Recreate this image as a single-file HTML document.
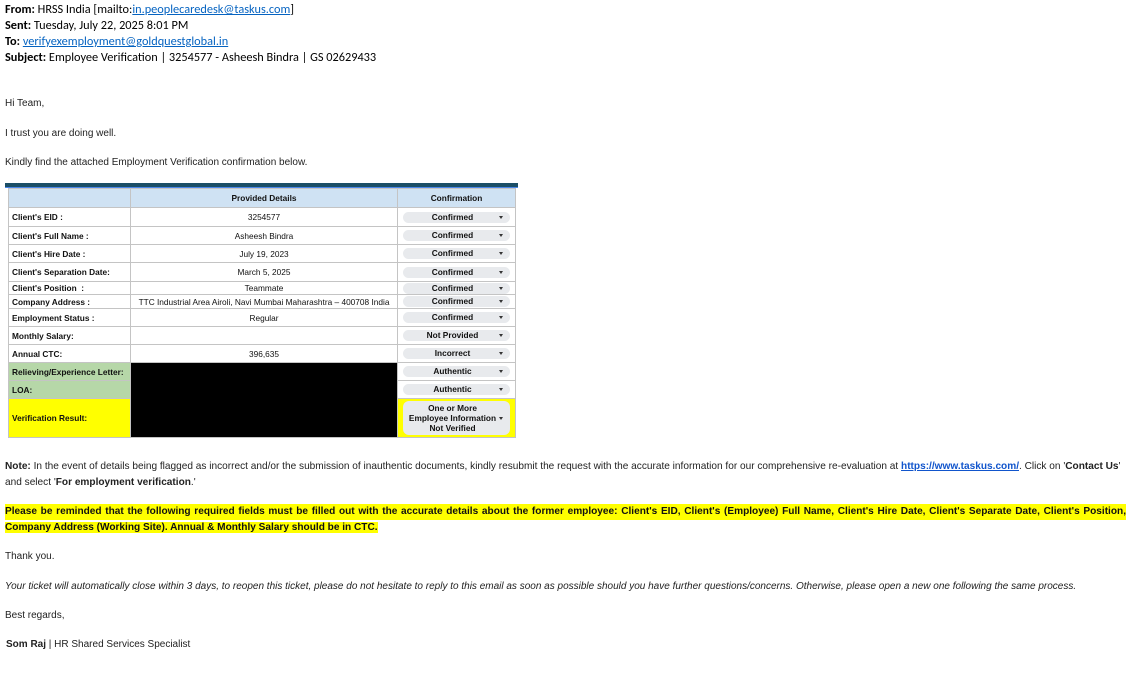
<!DOCTYPE html>
<html><head><meta charset="utf-8">
<style>
*{margin:0;padding:0;box-sizing:border-box}
html,body{width:1131px;height:690px;background:#fff;overflow:hidden}
body{position:relative;font-family:"Liberation Sans",Arial,sans-serif;color:#222}
.h{position:absolute;left:5px;font-family:"Carlito","Liberation Sans",sans-serif;font-size:12.3px;color:#000;white-space:nowrap;line-height:16px}
.h b{font-weight:bold}
.h a{color:#0563c1;text-decoration:underline}
.p{position:absolute;left:5px;font-size:10px;white-space:nowrap;color:#222}
.bar{position:absolute;left:5px;top:183px;width:513px;height:5px;background:#1b4e66;border-bottom:1px solid #4a86e8}
table{position:absolute;left:8px;top:188px;border-collapse:collapse;font-size:8.3px;table-layout:fixed}
td{border:1px solid #c4c4c4;padding:0;overflow:hidden;white-space:nowrap;color:#111}
td.l{font-weight:bold;padding-left:3px;width:122px}
td.m{text-align:center;width:267px}
td.r{width:118px;position:relative}
tr.hd td{background:#cfe2f3;font-weight:bold;text-align:center}
.pill{position:absolute;left:5px;right:5px;top:50%;height:11px;margin-top:-5.5px;background:#e8eaed;border-radius:6px;font-weight:bold;text-align:center;line-height:11px;padding-right:8px}
.pill:after{content:"";position:absolute;right:7px;top:50%;margin-top:-1.5px;border-left:2.5px solid transparent;border-right:2.5px solid transparent;border-top:3px solid #333}
.g{background:#b6d7a8}
.y{background:#ffff00}
.k{background:#000}
.note{position:absolute;left:5px;width:1121px;font-size:10.1px;line-height:16px;text-align:justify;color:#222}
.note a{color:#1155cc;font-weight:bold;text-decoration:underline}
.hl{position:absolute;left:5px;font-size:10.1px;line-height:16px;font-weight:bold;color:#111;white-space:nowrap}
.hl1{width:1121px;text-align:justify;text-align-last:justify;white-space:normal}
.hl span{background:#ffff00}
</style></head><body>
<div class="h" style="top:2px"><b>From:</b> HRSS India [mailto:<a>in.peoplecaredesk@taskus.com</a>]</div>
<div class="h" style="top:18px"><b>Sent:</b> Tuesday, July 22, 2025 8:01 PM</div>
<div class="h" style="top:34px"><b>To:</b> <a>verifyexemployment@goldquestglobal.in</a></div>
<div class="h" style="top:50px"><b>Subject:</b> Employee Verification | 3254577 - Asheesh Bindra | GS 02629433</div>

<div class="p" style="top:98px">Hi Team,</div>
<div class="p" style="top:128px">I trust you are doing well.</div>
<div class="p" style="top:157px">Kindly find the attached Employment Verification confirmation below.</div>

<div class="bar"></div>
<table>
<tr class="hd" style="height:19px"><td style="width:122px"></td><td style="width:267px">Provided Details</td><td style="width:118px">Confirmation</td></tr>
<tr style="height:19px"><td class="l">Client's EID :</td><td class="m">3254577</td><td class="r"><div class="pill">Confirmed</div></td></tr>
<tr style="height:18px"><td class="l">Client's Full Name :</td><td class="m">Asheesh Bindra</td><td class="r"><div class="pill">Confirmed</div></td></tr>
<tr style="height:18px"><td class="l">Client's Hire Date :</td><td class="m">July 19, 2023</td><td class="r"><div class="pill">Confirmed</div></td></tr>
<tr style="height:19px"><td class="l">Client's Separation Date:</td><td class="m">March 5, 2025</td><td class="r"><div class="pill">Confirmed</div></td></tr>
<tr style="height:13px"><td class="l">Client's Position &nbsp;:</td><td class="m">Teammate</td><td class="r"><div class="pill">Confirmed</div></td></tr>
<tr style="height:14px"><td class="l">Company Address :</td><td class="m">TTC Industrial Area Airoli, Navi Mumbai Maharashtra – 400708 India</td><td class="r"><div class="pill">Confirmed</div></td></tr>
<tr style="height:18px"><td class="l">Employment Status :</td><td class="m">Regular</td><td class="r"><div class="pill">Confirmed</div></td></tr>
<tr style="height:18px"><td class="l">Monthly Salary:</td><td class="m"></td><td class="r"><div class="pill">Not Provided</div></td></tr>
<tr style="height:18px"><td class="l">Annual CTC:</td><td class="m">396,635</td><td class="r"><div class="pill">Incorrect</div></td></tr>
<tr style="height:18px"><td class="l g">Relieving/Experience Letter:</td><td class="m k" rowspan="3"></td><td class="r"><div class="pill">Authentic</div></td></tr>
<tr style="height:18px"><td class="l g">LOA:</td><td class="r"><div class="pill">Authentic</div></td></tr>
<tr style="height:39px"><td class="l y">Verification Result:</td><td class="r y"><div class="pill" style="height:34px;margin-top:-17px;line-height:10px;padding-top:2px;border-radius:6px">One or More<br>Employee Information<br>Not Verified</div></td></tr>
</table>

<div class="note" style="top:459px"><b>Note:</b> In the event of details being flagged as incorrect and/or the submission of inauthentic documents, kindly resubmit the request with the accurate information for our comprehensive re-evaluation at <a>https://www.taskus.com/</a>. Click on '<b>Contact Us</b>'<br>and select '<b>For employment verification</b>.'</div>

<div class="hl hl1" style="top:504px;background:#ffff00">Please be reminded that the following required fields must be filled out with the accurate details about the former employee: Client's EID, Client's (Employee) Full Name, Client's Hire Date, Client's Separate Date, Client's Position,</div>
<div class="hl" style="top:520px"><span>Company Address (Working Site). Annual &amp; Monthly Salary should be in CTC.</span></div>

<div class="p" style="top:551px">Thank you.</div>
<div class="p" style="top:581px;font-style:italic;font-size:10px">Your ticket will automatically close within 3 days, to reopen this ticket, please do not hesitate to reply to this email as soon as possible should you have further questions/concerns. Otherwise, please open a new one following the same process.</div>
<div class="p" style="top:610px">Best regards,</div>
<div class="p" style="top:639px;left:6px"><b>Som Raj</b> | HR Shared Services Specialist</div>
</body></html>
